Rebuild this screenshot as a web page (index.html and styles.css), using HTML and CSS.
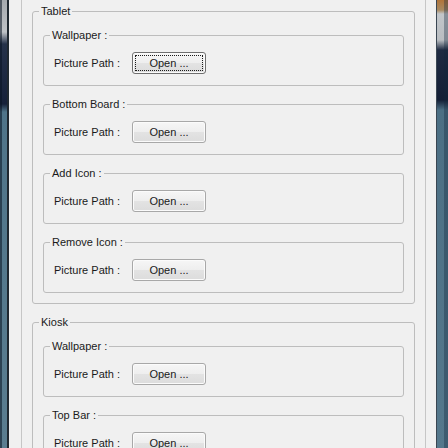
FILE: index.html
```html
<!DOCTYPE html>
<html>
<head>
<meta charset="utf-8">
<link rel="stylesheet" href="styles.css">
</head>
<body>
<div class="window">
  <div class="frame frame-left"></div>
  <div class="client">
    <div class="scroll">
      <fieldset class="group outer">
        <legend>Tablet</legend>
        <fieldset class="group inner">
          <legend>Wallpaper :</legend>
          <div class="row"><span class="label">Picture Path :</span><button class="btn focused">Open ...</button></div>
        </fieldset>
        <fieldset class="group inner">
          <legend>Bottom Board :</legend>
          <div class="row"><span class="label">Picture Path :</span><button class="btn">Open ...</button></div>
        </fieldset>
        <fieldset class="group inner">
          <legend>Add Icon :</legend>
          <div class="row"><span class="label">Picture Path :</span><button class="btn">Open ...</button></div>
        </fieldset>
        <fieldset class="group inner">
          <legend>Remove Icon :</legend>
          <div class="row"><span class="label">Picture Path :</span><button class="btn">Open ...</button></div>
        </fieldset>
      </fieldset>
      <fieldset class="group outer">
        <legend>Kiosk</legend>
        <fieldset class="group inner">
          <legend>Wallpaper :</legend>
          <div class="row"><span class="label">Picture Path :</span><button class="btn">Open ...</button></div>
        </fieldset>
        <fieldset class="group inner">
          <legend>Top Bar :</legend>
          <div class="row"><span class="label">Picture Path :</span><button class="btn">Open ...</button></div>
        </fieldset>
      </fieldset>
    </div>
  </div>
  <div class="frame frame-right"></div>
</div>
</body>
</html>
```
FILE: styles.css
```css
html, body {
  margin: 0;
  padding: 0;
  height: 100%;
  overflow: hidden;
}
body {
  font-family: "Liberation Sans", Arial, sans-serif;
  font-size: 11px;
  color: #1a1a1a;
}
.window {
  display: flex;
  height: 100%;
}
.frame-left {
  width: 7px;
  flex: none;
  border-right: 2px solid #1f2830;
  background: linear-gradient(to bottom, #a4a9ae 0, #bfc3c7 32px, #25324a 44px, #16213a 104px, #4f7489 112px, #5a7d90 100%);
  box-shadow: inset 2px 0 0 rgba(10, 20, 35, 0.55);
}
.frame-right {
  width: 11px;
  flex: none;
  border-left: 1px solid #3a4652;
  background: linear-gradient(to bottom, #b0743a 0, #a88a62 10px, #c2c6ca 14px, #b9bdc1 40px, #1f2b42 50px, #141f36 100px, #4c6f84 110px, #55788c 100%);
  box-shadow: inset -4px 0 0 rgba(20, 40, 60, 0.35);
}
.client {
  flex: 1;
  background: #f0f0f0;
  min-width: 0;
}
.scroll {
  margin: 0 10px 0 12px;
  border-left: 1px solid #c6c6c6;
  border-right: 1px solid #c6c6c6;
  padding: 4px 10px 0 10px;
  height: 100%;
  box-sizing: border-box;
}
.group {
  margin: 0;
  min-width: 0;
  border: 1px solid #bdbdbd;
  border-radius: 3px;
}
.group > legend {
  padding: 0 2px;
  margin-left: -4px;
  line-height: 14px;
  height: 14px;
}
.outer {
  padding: 10px 10px 10px 10px;
  margin-bottom: 11px;
}
.inner {
  padding: 10px 10px 11px 10px;
  margin-bottom: 11px;
}
.inner:last-child {
  margin-bottom: 0;
}
.row {
  display: flex;
  align-items: center;
  height: 22px;
}
.label {
  width: 78px;
  flex: none;
  white-space: nowrap;
}
.btn {
  width: 74px;
  height: 22px;
  padding: 0;
  font: inherit;
  color: #1a1a1a;
  border: 1px solid #a8a8a8;
  border-radius: 3px;
  background: linear-gradient(to bottom, #f6f6f6 0%, #eeeeee 50%, #e3e3e3 51%, #dcdcdc 100%);
  box-shadow: inset 0 0 0 1px #fbfbfb;
}
.btn.focused {
  border-color: #6f6f6f;
  outline: 1px dotted #1a1a1a;
  outline-offset: -4px;
}
```
